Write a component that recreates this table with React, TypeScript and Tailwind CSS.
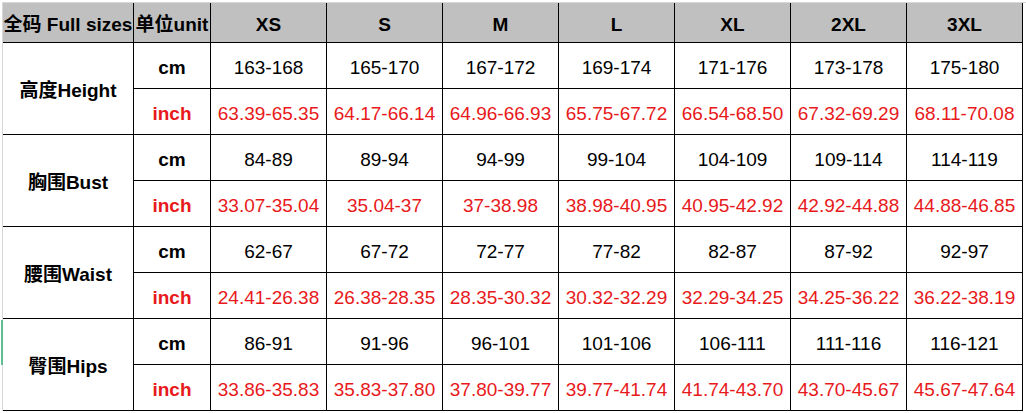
import { Fragment } from "react";

const sizes = ["XS", "S", "M", "L", "XL", "2XL", "3XL"];

const rows = [
  {
    label: "高度Height",
    cm: ["163-168", "165-170", "167-172", "169-174", "171-176", "173-178", "175-180"],
    inch: ["63.39-65.35", "64.17-66.14", "64.96-66.93", "65.75-67.72", "66.54-68.50", "67.32-69.29", "68.11-70.08"],
  },
  {
    label: "胸围Bust",
    cm: ["84-89", "89-94", "94-99", "99-104", "104-109", "109-114", "114-119"],
    inch: ["33.07-35.04", "35.04-37", "37-38.98", "38.98-40.95", "40.95-42.92", "42.92-44.88", "44.88-46.85"],
  },
  {
    label: "腰围Waist",
    cm: ["62-67", "67-72", "72-77", "77-82", "82-87", "87-92", "92-97"],
    inch: ["24.41-26.38", "26.38-28.35", "28.35-30.32", "30.32-32.29", "32.29-34.25", "34.25-36.22", "36.22-38.19"],
  },
  {
    label: "臀围Hips",
    cm: ["86-91", "91-96", "96-101", "101-106", "106-111", "111-116", "116-121"],
    inch: ["33.86-35.83", "35.83-37.80", "37.80-39.77", "39.77-41.74", "41.74-43.70", "43.70-45.67", "45.67-47.64"],
  },
];

const cell = "flex items-center justify-center whitespace-nowrap pt-[3px] border-r border-b border-black";

export default function App() {
  return (
    <div
      className="relative w-[1026px] h-[413px] bg-white pl-[2px] pt-[2px] text-[19px] leading-none text-black overflow-hidden"
      style={{ fontFamily: '"Liberation Sans", "Noto Sans CJK SC", sans-serif' }}
    >
      {/* excel row marker */}
      <div className="absolute left-[1px] top-[320px] w-[2px] h-[45px] bg-[#5fbf8f]" />
      <div className="grid grid-cols-[131px_77px_repeat(7,116px)] grid-rows-[40px_repeat(8,46px)] border-t border-l border-[#d8d8d8]">
        <div className={`${cell} bg-[#c0c0c0] font-bold`}>全码 Full sizes</div>
        <div className={`${cell} bg-[#c0c0c0] font-bold`}>单位unit</div>
        {sizes.map((s) => (
          <div key={s} className={`${cell} bg-[#c0c0c0] font-bold`}>
            {s}
          </div>
        ))}
        {rows.map((r) => (
          <Fragment key={r.label}>
            <div className={`${cell} row-span-2 font-bold`}>{r.label}</div>
            <div className={`${cell} font-bold`}>cm</div>
            {r.cm.map((v, i) => (
              <div key={"c" + i} className={cell}>
                {v}
              </div>
            ))}
            <div className={`${cell} font-bold text-[#e8191b]`}>inch</div>
            {r.inch.map((v, i) => (
              <div key={"i" + i} className={`${cell} text-[#e8191b]`}>
                {v}
              </div>
            ))}
          </Fragment>
        ))}
      </div>
    </div>
  );
}
